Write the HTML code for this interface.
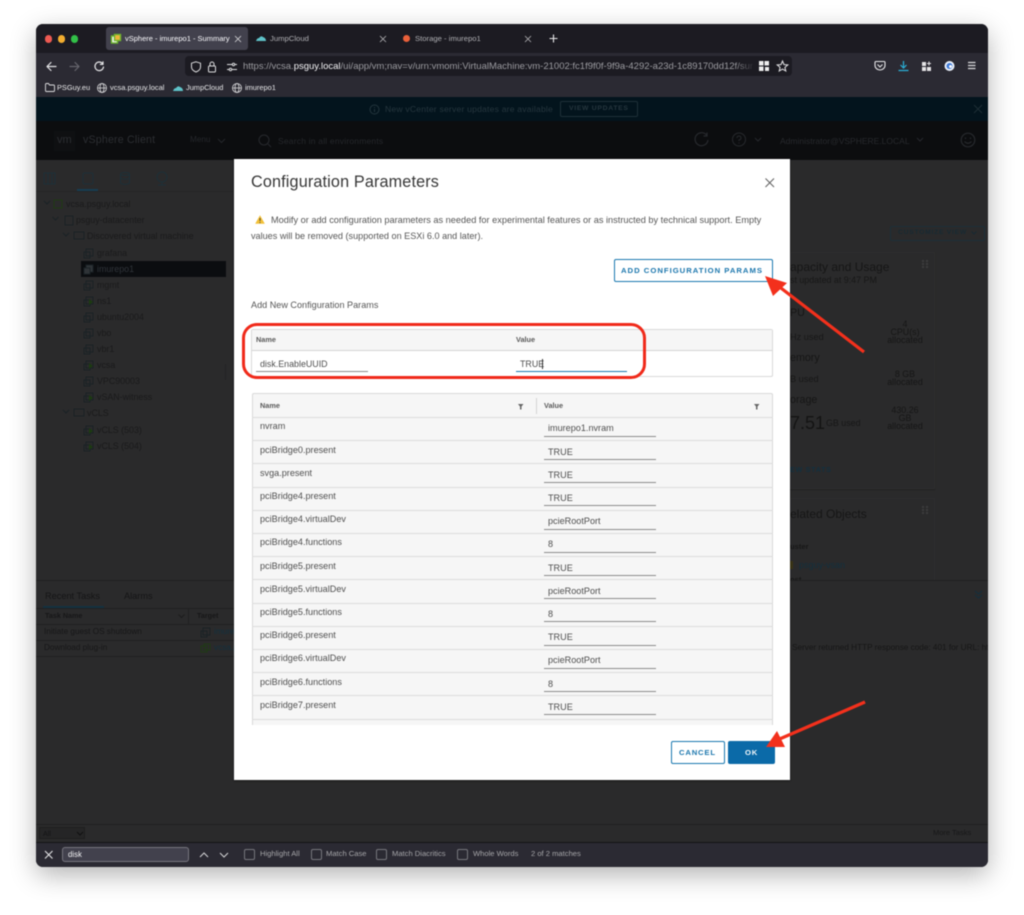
<!DOCTYPE html>
<html><head><meta charset="utf-8"><style>
html,body{margin:0;padding:0;background:#fff}
#p{position:relative;width:1024px;height:915px;overflow:hidden;background:#fff;font-family:"Liberation Sans",sans-serif;filter:blur(.4px)}
#w{position:absolute;left:36px;top:24px;width:952px;height:843px;border-radius:7px;background:#2a2a2b;box-shadow:0 8px 26px rgba(0,0,0,.3);overflow:hidden}
.a{position:absolute;white-space:nowrap;line-height:1}
.b{position:absolute}
svg{position:absolute;overflow:visible}
.d{color:#505050;font-size:9.1px}
.m{color:#565656;font-size:9.2px}
.t{font-size:8.9px;color:#1a1a1b}
.l{position:absolute;height:1px;background:#8c8c8c;left:544px;width:112px}
.r{position:absolute;left:252px;width:521px;height:1px;background:#dcdcdc}
.cb{position:absolute;width:9px;height:9px;border:1px solid #77777d;border-radius:2px;top:849px}
.ft{color:#a5a5a8;font-size:7.6px;top:850px}
.h{font-size:7.3px;font-weight:bold;color:#5a5a5a}
</style></head><body><div id="p">
<div id="w"></div>

<!-- tab bar -->
<div class="b" style="left:36px;top:24px;width:952px;height:29px;background:#1c1b22;border-radius:7px 7px 0 0"></div>
<div class="b" style="left:44.5px;top:35px;width:7.5px;height:7.5px;border-radius:50%;background:#ee5a52"></div>
<div class="b" style="left:57.5px;top:35px;width:7.5px;height:7.5px;border-radius:50%;background:#f2ad2f"></div>
<div class="b" style="left:70.5px;top:35px;width:7.5px;height:7.5px;border-radius:50%;background:#32c048"></div>
<div class="b" style="left:106px;top:27px;width:142px;height:23px;border-radius:3px;background:#42414d"></div>
<svg style="left:111px;top:34px" width="10" height="10"><rect x="0.5" y="2" width="6" height="7" fill="#f4f4f4" stroke="#6cb52d" stroke-width="1.4"/><rect x="3.5" y="0.5" width="6" height="6" fill="#f1b43a" stroke="#6cb52d" stroke-width="1.4"/></svg>
<div class="a" style="left:125px;top:35px;font-size:7.5px;color:#fbfbfe">vSphere - imurepo1 - Summary</div>
<svg style="left:235px;top:36px" width="6" height="6" stroke="#d8d8da" stroke-width=".8"><path d="M0 0L6 6M6 0L0 6"/></svg>
<svg style="left:256px;top:35px" width="10" height="7"><path d="M0 6Q1 3 3 3Q5 0 7 2Q10 3 10 6Z" fill="#5fc3c9"/></svg>
<div class="a" style="left:270px;top:35px;font-size:7.7px;color:#aeaeb2">JumpCloud</div>
<svg style="left:380px;top:36px" width="6" height="6" stroke="#b5b5b8" stroke-width=".8"><path d="M0 0L6 6M6 0L0 6"/></svg>
<div class="b" style="left:403px;top:35px;width:7px;height:7px;border-radius:50%;background:#e9603a"></div>
<div class="a" style="left:415px;top:35px;font-size:7.7px;color:#aeaeb2">Storage - imurepo1</div>
<svg style="left:525px;top:36px" width="6" height="6" stroke="#b5b5b8" stroke-width=".8"><path d="M0 0L6 6M6 0L0 6"/></svg>
<svg style="left:549px;top:34px" width="9" height="9" stroke="#e8e8ea" stroke-width="1.1"><path d="M4.500 .5V8.500M.5 4.500H8.500"/></svg>

<!-- toolbar -->
<div class="b" style="left:36px;top:53px;width:952px;height:44px;background:#2b2a33"></div>
<svg style="left:46px;top:61px" width="60" height="12" fill="none" stroke-width="1.2" stroke-linecap="round" stroke-linejoin="round"><path d="M1 5.500H10M5 1.500L1 5.500L5 9.500" stroke="#e4e4e6"/><path d="M24 5.500H33M29 1.500L33 5.500L29 9.500" stroke="#66656d"/><path d="M56.500 2.500A4.300 4.300 0 1 0 57.500 6M57 .8V3.400H54.400" stroke="#e4e4e6"/></svg>
<div class="b" style="left:185px;top:56px;width:607px;height:20px;border-radius:4px;background:#1c1b22"></div>
<svg style="left:190px;top:61px" width="50" height="12" fill="none" stroke="#dcdcde" stroke-width="1"><path d="M6 .8L10.500 2.200V6C10.500 8.500 8.500 10 6 11C3.500 10 1.500 8.500 1.500 6V2.200Z"/><rect x="18.500" y="5" width="7" height="6" rx="1"/><path d="M20 5V3A2 2 0 0 1 24 3V5"/><path d="M37 3.500H42M45 3.500H47M37 8.500H39M42 8.500H47"/><circle cx="43.500" cy="3.500" r="1.200"/><circle cx="40.500" cy="8.500" r="1.200"/></svg>
<div class="a" style="left:243px;top:62px;width:510px;overflow:hidden;font-size:9.5px;color:#9b9ba0">https://vcsa.<span style="color:#f4f4f6">psguy.local</span>/ui/app/vm;nav=v/urn:vmomi:VirtualMachine:vm-21002:fc1f9f0f-9f9a-4292-a23d-1c89170dd12f/summary</div>
<div class="b" style="left:735px;top:58px;width:20px;height:16px;background:linear-gradient(90deg,rgba(28,27,34,0),#1c1b22)"></div>
<svg style="left:759px;top:60px" width="30" height="12"><path d="M0 1H4.500V5.500H0ZM5.500 1H10V5.500H5.500ZM0 6.500H4.500V11H0ZM6 7H10V11H6Z" fill="#eee"/><path d="M23.500 1L25 4.600L28.800 4.900L25.900 7.400L26.800 11L23.500 9.100L20.200 11L21.100 7.400L18.200 4.900L22 4.600Z" fill="none" stroke="#e6e6e8"/></svg>
<svg style="left:873px;top:60px" width="105" height="13" fill="none"><path d="M3 1.500H11Q12 1.500 12 2.500V5.500C12 8 9.500 10 7 10C4.500 10 2 8 2 5.500V2.500Q2 1.500 3 1.500ZM4.500 4.500L7 7L9.500 4.500" stroke="#e8e8ea" stroke-width="1.1"/><path d="M30.500 1V7.500M27.500 5L30.500 8L33.500 5M25.500 10.500H35.500" stroke="#2ab0d8" stroke-width="1.2"/><path d="M49 2H53V6H49ZM49 7H53V11H49ZM54 7H58V11H54Z" fill="#e4e4e6"/><path d="M56 1.500V5.500M54 3.500H58" stroke="#e4e4e6"/><circle cx="76.500" cy="6" r="5" fill="#e9f0fa"/><circle cx="76.500" cy="6" r="3" fill="#3b78d8"/><circle cx="77.500" cy="6.500" r="1.500" fill="#fff"/><path d="M95 2.500H102.500M95 5.500H102.500M95 8.500H102.500" stroke="#dcdcde" stroke-width="1.2"/></svg>

<!-- bookmarks -->
<svg style="left:45px;top:83px" width="10" height="9" fill="none" stroke="#dcdcde" stroke-width=".9"><path d="M.5 1.500Q.5 .5 1.500 .5H3.500L4.500 2H8.500Q9.500 2 9.500 3V7.500Q9.500 8.500 8.500 8.500H1.500Q.5 8.500 .5 7.500Z"/></svg>
<div class="a" style="left:57px;top:84px;font-size:7.4px;color:#e8e8ea">PSGuy.eu</div>
<svg style="left:97px;top:83px" width="10" height="10" fill="none" stroke="#dcdcde" stroke-width=".8"><circle cx="5" cy="5" r="4.500"/><ellipse cx="5" cy="5" rx="2" ry="4.500"/><path d="M.5 5H9.500"/></svg>
<div class="a" style="left:110px;top:84px;font-size:7.5px;color:#e8e8ea">vcsa.psguy.local</div>
<svg style="left:173px;top:85px" width="10" height="7"><path d="M0 6Q1 3 3 3Q5 0 7 2Q10 3 10 6Z" fill="#5fc3c9"/></svg>
<div class="a" style="left:186px;top:84px;font-size:7.4px;color:#e8e8ea">JumpCloud</div>
<svg style="left:232px;top:83px" width="10" height="10" fill="none" stroke="#dcdcde" stroke-width=".8"><circle cx="5" cy="5" r="4.500"/><ellipse cx="5" cy="5" rx="2" ry="4.500"/><path d="M.5 5H9.500"/></svg>
<div class="a" style="left:245px;top:84px;font-size:7.4px;color:#e8e8ea">imurepo1</div>

<!-- vsphere banner -->
<div class="b" style="left:36px;top:97px;width:952px;height:24px;background:#03141d"></div>
<svg style="left:369px;top:104px" width="11" height="11" fill="none" stroke="#23353d"><circle cx="5.500" cy="5.500" r="4.500"/><path d="M5.500 5V8M5.500 3V4"/></svg>
<div class="a" style="left:385px;top:105px;font-size:8.6px;letter-spacing:.2px;color:#26363e">New vCenter server updates are available</div>
<div class="b" style="left:560px;top:101px;width:76px;height:14px;border:1px solid #1e3038;border-radius:2px"></div>
<div class="a" style="left:569px;top:106px;font-size:6.8px;font-weight:bold;letter-spacing:.7px;color:#26363e">VIEW UPDATES</div>
<svg style="left:974px;top:105px" width="9" height="9" stroke="#1e2e35"><path d="M0 0L8 8M8 0L0 8"/></svg>

<!-- header -->
<div class="b" style="left:36px;top:121px;width:952px;height:39px;background:#0c0d0f"></div>
<div class="b" style="left:54px;top:131px;width:21px;height:20px;background:#0f1012"></div>
<div class="a" style="left:57px;top:135px;font-size:11px;color:#2c2e32">vm</div>
<div class="a" style="left:83px;top:135px;font-size:10.6px;letter-spacing:.2px;color:#2c2e32">vSphere Client</div>
<div class="a" style="left:190px;top:136px;font-size:8.2px;color:#25272b">Menu</div>
<svg style="left:217px;top:138px" width="9" height="6" fill="none" stroke="#25272b"><path d="M1 1L4.500 4.500L8 1"/></svg>
<svg style="left:258px;top:134px" width="14" height="14" fill="none" stroke="#27292d"><circle cx="6" cy="6" r="5"/><path d="M10 10L13 13"/></svg>
<div class="a" style="left:278px;top:136.5px;font-size:8.5px;letter-spacing:.2px;color:#25272b">Search in all environments</div>
<svg style="left:694px;top:132px" width="15" height="15" fill="none" stroke="#27292d" stroke-width="1.2"><path d="M12.500 3A6.500 6.500 0 1 0 14 8M13 .5V4H9.500"/></svg>
<svg style="left:732px;top:132px" width="32" height="15" fill="none" stroke="#27292d"><circle cx="7" cy="7.500" r="6.500"/><path d="M5 6Q5 4 7 4Q9 4 9 6Q9 7.500 7 8V9M7 10.500V11.500M23 6L26 9L29 6"/></svg>
<div class="a" style="left:780px;top:137px;font-size:8.5px;color:#27292d">Administrator@VSPHERE.LOCAL</div>
<svg style="left:916px;top:137px" width="8" height="6" fill="none" stroke="#27292d"><path d="M1 1L4 4L7 1"/></svg>
<svg style="left:960px;top:132px" width="16" height="16" fill="none" stroke="#27292d" stroke-width="1.2"><circle cx="8" cy="8" r="6.800"/><path d="M4.500 9.500Q8 13 11.500 9.500"/><path d="M5.500 5.500V7M10.500 5.500V7"/></svg>

<!-- sidebar -->
<div class="b" style="left:233px;top:160px;width:1px;height:420px;background:#222223"></div>
<svg style="left:43px;top:171px" width="130" height="18" fill="none" stroke="#1d3038"><rect x="1" y="2" width="11" height="11"/><path d="M5 2V13M9 2V13"/><rect x="40" y="2" width="10" height="11" rx="1.500"/><ellipse cx="82" cy="3" rx="4.500" ry="1.500"/><path d="M77.500 3V12Q82 15 86.500 12V3M77.500 7Q82 9.500 86.500 7"/><circle cx="119" cy="6" r="5"/><path d="M119 11V14M115 14H123"/></svg>
<div class="b" style="left:77px;top:189px;width:21px;height:2px;background:#173d52"></div>
<div class="b" style="left:36px;top:191px;width:197px;height:1px;background:#252526"></div>
<div class="b" style="left:81px;top:261px;width:145px;height:16px;background:#0b0d10"></div>
<div class="a t" style="left:66px;top:199.5px">vcsa.psguy.local</div>
<div class="a t" style="left:76px;top:215.5px">psguy-datacenter</div>
<div class="a t" style="left:87px;top:231.5px">Discovered virtual machine</div>
<div class="a t" style="left:97px;top:248.5px">grafana</div>
<div class="a t" style="left:97px;top:264.5px;color:#30343a">imurepo1</div>
<div class="a t" style="left:97px;top:280.5px">mgmt</div>
<div class="a t" style="left:97px;top:296.5px">ns1</div>
<div class="a t" style="left:97px;top:312.5px">ubuntu2004</div>
<div class="a t" style="left:97px;top:328.5px">vbo</div>
<div class="a t" style="left:97px;top:344.5px">vbr1</div>
<div class="a t" style="left:97px;top:360.5px">vcsa</div>
<div class="a t" style="left:97px;top:376.5px">VPC90003</div>
<div class="a t" style="left:97px;top:392.5px">vSAN-witness</div>
<div class="a t" style="left:87px;top:408.5px">vCLS</div>
<div class="a t" style="left:97px;top:425.5px">vCLS (503)</div>
<div class="a t" style="left:97px;top:441.5px">vCLS (504)</div>
<svg style="left:41px;top:200px" width="60" height="255" fill="none" stroke="#1a2226"><path d="M3 1L6 4L9 1M11.500 17L14.500 20L17.500 17M22 33L25 36L28 33M22 210L25 213L28 210"/><rect x="13" y="0" width="8" height="8" stroke="#1f3a14"/><rect x="24" y="16" width="8" height="9"/><rect x="33" y="32" width="10" height="7"/><rect x="33" y="209" width="10" height="7"/><rect x="45" y="49" width="7" height="7"/><rect x="43" y="52" width="6" height="6"/><rect x="45" y="65" width="7" height="7" fill="#2f3337"/><rect x="43" y="68" width="6" height="6" fill="#2f3337"/><rect x="45" y="81" width="7" height="7"/><rect x="43" y="84" width="6" height="6"/><rect x="45" y="97" width="7" height="7"/><rect x="43" y="100" width="6" height="6"/><rect x="45" y="113" width="7" height="7"/><rect x="43" y="116" width="6" height="6"/><rect x="45" y="129" width="7" height="7"/><rect x="43" y="132" width="6" height="6"/><rect x="45" y="145" width="7" height="7"/><rect x="43" y="148" width="6" height="6"/><rect x="45" y="161" width="7" height="7"/><rect x="43" y="164" width="6" height="6"/><rect x="45" y="177" width="7" height="7"/><rect x="43" y="180" width="6" height="6"/><rect x="45" y="193" width="7" height="7"/><rect x="43" y="196" width="6" height="6"/><rect x="45" y="226" width="7" height="7"/><rect x="43" y="229" width="6" height="6"/><rect x="45" y="242" width="7" height="7"/><rect x="43" y="245" width="6" height="6"/><path d="M48 99V105L52 102ZM48 163V169L52 166ZM48 195V201L52 198ZM48 228V234L52 231ZM48 244V250L52 247Z" fill="#1c3b10" stroke="none"/></svg>
<div class="b" style="left:225px;top:364px;width:1px;height:16px;background:#242425"></div>

<!-- right dim panel -->
<div class="b" style="left:890px;top:226px;width:93px;height:13px;border:1px solid #1c2f38;border-radius:2px"></div>
<div class="a" style="left:898px;top:230px;font-size:6.8px;font-weight:bold;letter-spacing:.7px;color:#182a33">CUSTOMIZE VIEW</div>
<svg style="left:971px;top:231px" width="6" height="4" fill="none" stroke="#182a33"><path d="M.5 .5L3 3L5.500 .5"/></svg>
<div class="b" style="left:790px;top:252px;width:143px;height:235px;border:1px solid #2e2e2f;box-shadow:0 1px 1px #222"></div>
<div class="b" style="left:790px;top:498px;width:143px;height:91px;border:1px solid #2e2e2f"></div>
<div class="a" style="left:790px;top:261px;font-size:12px;color:#161616">apacity and Usage</div>
<div class="a" style="left:790px;top:275.5px;font-size:8.9px;color:#171717">st updated at 9:47 PM</div>
<div class="a" style="left:790px;top:308px;font-size:10.7px;color:#161616">PU</div>
<div class="a" style="left:790px;top:332.5px;font-size:9.2px;color:#171717">Hz used</div>
<div class="a" style="left:790px;top:353px;font-size:10.7px;color:#161616">emory</div>
<div class="a" style="left:790px;top:374.5px;font-size:9.2px;color:#171717">B used</div>
<div class="a" style="left:790px;top:395px;font-size:10.7px;color:#161616">orage</div>
<div class="a" style="left:790px;top:414px;font-size:18px;color:#141414">7.51</div>
<div class="a" style="left:826px;top:419px;font-size:8.9px;color:#171717">GB used</div>
<div class="a" style="left:885px;top:320px;width:40px;text-align:center;font-size:8.9px;line-height:8px;color:#161616;white-space:normal">4<br>CPU(s)<br>allocated</div>
<div class="a" style="left:885px;top:370px;width:40px;text-align:center;font-size:8.9px;line-height:8px;color:#161616;white-space:normal">8 GB<br>allocated</div>
<div class="a" style="left:885px;top:406px;width:40px;text-align:center;font-size:8.9px;line-height:8px;color:#161616;white-space:normal">430.26<br>GB<br>allocated</div>
<div class="a" style="left:790px;top:466px;font-size:7.2px;font-weight:bold;letter-spacing:.7px;color:#13303f">EW STATS</div>
<div class="a" style="left:790px;top:508px;font-size:12px;color:#161616">elated Objects</div>
<div class="a" style="left:790px;top:543px;font-size:7.6px;font-weight:bold;color:#171717">uster</div>
<div class="b" style="left:790px;top:561px;width:3px;height:8px;background:#3a3416"></div>
<div class="a" style="left:799px;top:561px;font-size:9px;color:#12303f">psguy-vsan</div>
<div class="a" style="left:790px;top:576px;font-size:7.6px;font-weight:bold;color:#171717">ost</div>
<svg style="left:922px;top:260px" width="6" height="8" fill="#3b3b3c"><path d="M0 0h2v2H0zM4 0h2v2H4zM0 3h2v2H0zM4 3h2v2H4zM0 6h2v2H0zM4 6h2v2H4z"/></svg>
<svg style="left:922px;top:506px" width="6" height="8" fill="#3b3b3c"><path d="M0 0h2v2H0zM4 0h2v2H4zM0 3h2v2H0zM4 3h2v2H4zM0 6h2v2H0zM4 6h2v2H4z"/></svg>

<!-- bottom panel -->
<div class="b" style="left:790px;top:581px;width:198px;height:243px;background:#2a2a2b"></div>
<div class="b" style="left:36px;top:580px;width:952px;height:1px;background:#202021"></div>
<div class="b" style="left:36px;top:581px;width:198px;height:243px;background:#2a2a2b"></div>
<div class="a" style="left:45px;top:592px;font-size:9.2px;color:#151516">Recent Tasks</div>
<div class="a" style="left:124px;top:592px;font-size:9.2px;color:#151516">Alarms</div>
<div class="b" style="left:43px;top:606px;width:61px;height:2px;background:#143140"></div>
<div class="b" style="left:36px;top:608px;width:198px;height:1px;background:#202021"></div>
<div class="a" style="left:45px;top:612px;font-size:7.2px;font-weight:bold;color:#171718">Task Name</div>
<svg style="left:178px;top:614px" width="7" height="5" fill="none" stroke="#1c1c1d"><path d="M.5 .5L3.500 3.500L6.500 .5"/></svg>
<div class="a" style="left:197px;top:612px;font-size:7.2px;font-weight:bold;color:#171718">Target</div>
<div class="b" style="left:188px;top:609px;width:1px;height:15px;background:#202021"></div>
<div class="b" style="left:36px;top:624px;width:198px;height:1px;background:#202021"></div>
<div class="b" style="left:36px;top:640px;width:198px;height:1px;background:#202021"></div>
<div class="b" style="left:36px;top:656px;width:198px;height:1px;background:#202021"></div>
<div class="a" style="left:44px;top:628px;font-size:8.2px;color:#171718">Initiate guest OS shutdown</div>
<div class="a" style="left:44px;top:644px;font-size:8.2px;color:#171718">Download plug-in</div>
<svg style="left:200px;top:627px" width="11" height="28" fill="none" stroke="#1a2226"><rect x="3" y="1" width="7" height="7"/><rect x="1" y="4" width="6" height="6"/><rect x="1" y="19" width="6" height="6" stroke="#1f3a14"/><rect x="4" y="17" width="6" height="6" stroke="#1f3a14"/></svg>
<div class="a" style="left:214px;top:628px;font-size:8.2px;color:#12303f">imure</div>
<div class="a" style="left:214px;top:644px;font-size:8.2px;color:#12303f">vcsa.p</div>
<div class="a" style="left:792px;top:644px;width:196px;overflow:hidden;font-size:8.2px;color:#161616">Server returned HTTP response code: 401 for URL: ht</div>
<svg style="left:974px;top:590px" width="9" height="10" fill="none" stroke="#12303f"><path d="M1 1L4.500 4L8 1M1 5L4.500 8L8 5"/></svg>

<!-- bottom strip + find -->
<div class="b" style="left:36px;top:824px;width:952px;height:1px;background:#202021"></div>
<div class="b" style="left:39px;top:827px;width:46px;height:12px;background:#252526;border:1px solid #1e1e1f;box-sizing:border-box"></div>
<div class="a" style="left:43px;top:830px;font-size:7.2px;color:#141415">All</div>
<svg style="left:76px;top:831px" width="8" height="6" fill="none" stroke="#111"><path d="M1 1L4 4L7 1"/></svg>
<div class="a" style="left:933px;top:829px;font-size:7.5px;color:#171718">More Tasks</div>
<div class="b" style="left:36px;top:842px;width:952px;height:1px;background:#131316"></div>
<div class="b" style="left:36px;top:843px;width:952px;height:24px;background:#2b2a33;border-radius:0 0 7px 7px"></div>
<svg style="left:44px;top:850px" width="10" height="10" stroke="#e2e2e4" stroke-width="1.1"><path d="M1 1L8.500 8.500M8.500 1L1 8.500"/></svg>
<div class="b" style="left:62px;top:847px;width:127px;height:15px;box-sizing:border-box;background:#42414d;border:1px solid #77767f;border-radius:3px"></div>
<div class="a" style="left:68px;top:850.5px;font-size:7.8px;color:#f0f0f2">disk</div>
<svg style="left:199px;top:851px" width="32" height="8" fill="none" stroke="#d4d4d6" stroke-width="1"><path d="M1 6L5 2L9 6M21 2L25 6L29 2"/></svg>
<div class="cb" style="left:244px"></div><div class="a ft" style="left:260px">Highlight All</div>
<div class="cb" style="left:311px"></div><div class="a ft" style="left:326px">Match Case</div>
<div class="cb" style="left:376px"></div><div class="a ft" style="left:392px">Match Diacritics</div>
<div class="cb" style="left:457px"></div><div class="a ft" style="left:473px">Whole Words</div>
<div class="a ft" style="left:531px">2 of 2 matches</div>

<!-- modal -->
<div class="b" style="left:234px;top:158.5px;width:555.5px;height:621.5px;background:#fff;box-shadow:0 1px 2px rgba(0,0,0,.4)"></div>
<div class="a" style="left:251px;top:174px;font-size:16.2px;color:#373737;letter-spacing:.15px">Configuration Parameters</div>
<svg style="left:765px;top:178px" width="10" height="10" stroke="#666" stroke-width="1.1"><path d="M.5 .5L9 9M9 .5L.5 9"/></svg>
<svg style="left:254.5px;top:215px" width="10" height="9"><path d="M5 .3L9.800 8.700H.2Z" fill="#f2c037"/><path d="M5 3V6M5 7V8" stroke="#3a3a3a" stroke-width=".9"/></svg>
<div class="a m" style="left:271px;top:216px">Modify or add configuration parameters as needed for experimental features or as instructed by technical support. Empty</div>
<div class="a m" style="left:251px;top:231.5px;font-size:9.1px">values will be removed (supported on ESXi 6.0 and later).</div>
<div class="b" style="left:613.5px;top:259px;width:159px;height:23px;box-sizing:border-box;border:1px solid #1a78b0;border-radius:2px;background:#fff"></div>
<div class="a" style="left:621px;top:267px;font-size:7.7px;font-weight:bold;letter-spacing:1px;color:#1b76ad">ADD CONFIGURATION PARAMS</div>
<div class="a m" style="left:251px;top:300.5px;font-size:9.1px">Add New Configuration Params</div>

<!-- add table -->
<div class="b" style="left:251px;top:329px;width:522px;height:48px;box-sizing:border-box;border:1px solid #d9d9d9;border-radius:2px;background:#fff"></div>
<div class="b" style="left:252px;top:330px;width:520px;height:20px;background:#f6f6f6;border-bottom:1px solid #d4d4d4"></div>
<div class="a h" style="left:256px;top:335.5px">Name</div>
<div class="a h" style="left:516px;top:335.5px">Value</div>
<div class="a d" style="left:260px;top:360px;font-size:8.9px">disk.EnableUUID</div>
<div class="b" style="left:256px;top:371px;width:112px;height:1px;background:#8c8c8c"></div>
<div class="a d" style="left:520px;top:360px;font-size:8.9px">TRUE</div>
<div class="b" style="left:542px;top:359px;width:1px;height:10px;background:#333"></div>
<div class="b" style="left:516px;top:371px;width:111px;height:1px;background:#1a78b0"></div>

<!-- params table -->
<div class="b" style="left:252px;top:393px;width:521px;height:335px;box-sizing:border-box;border:1px solid #d9d9d9;border-bottom:none;border-radius:2px 2px 0 0;background:#f6f6f6"></div>
<div class="b" style="left:536px;top:398px;width:1px;height:16px;background:#d4d4d4"></div>
<div class="a h" style="left:260px;top:401.5px">Name</div>
<div class="a h" style="left:544px;top:401.5px">Value</div>
<svg style="left:518px;top:404px" width="6" height="6" fill="#666"><path d="M0 0H5.500L3.500 2.500V5.500H2V2.500Z"/></svg>
<svg style="left:754px;top:404px" width="6" height="6" fill="#666"><path d="M0 0H5.500L3.500 2.500V5.500H2V2.500Z"/></svg>

<div class="r" style="top:417px"></div><div class="r" style="top:440px"></div><div class="r" style="top:463px"></div><div class="r" style="top:487px"></div><div class="r" style="top:510px"></div><div class="r" style="top:533px"></div><div class="r" style="top:556px"></div><div class="r" style="top:579px"></div><div class="r" style="top:603px"></div><div class="r" style="top:626px"></div><div class="r" style="top:649px"></div><div class="r" style="top:672px"></div><div class="r" style="top:695px"></div><div class="r" style="top:719px"></div>

<div class="a d" style="left:260px;top:422px">nvram</div><div class="a d" style="left:548px;top:424px">imurepo1.nvram</div><div class="l" style="top:436px"></div>
<div class="a d" style="left:260px;top:446px">pciBridge0.present</div><div class="a d" style="left:548px;top:448px">TRUE</div><div class="l" style="top:459px"></div>
<div class="a d" style="left:260px;top:469px">svga.present</div><div class="a d" style="left:548px;top:471px">TRUE</div><div class="l" style="top:482px"></div>
<div class="a d" style="left:260px;top:492px">pciBridge4.present</div><div class="a d" style="left:548px;top:494px">TRUE</div><div class="l" style="top:505px"></div>
<div class="a d" style="left:260px;top:515px">pciBridge4.virtualDev</div><div class="a d" style="left:548px;top:517px">pcieRootPort</div><div class="l" style="top:529px"></div>
<div class="a d" style="left:260px;top:538px">pciBridge4.functions</div><div class="a d" style="left:548px;top:540px">8</div><div class="l" style="top:552px"></div>
<div class="a d" style="left:260px;top:562px">pciBridge5.present</div><div class="a d" style="left:548px;top:564px">TRUE</div><div class="l" style="top:575px"></div>
<div class="a d" style="left:260px;top:585px">pciBridge5.virtualDev</div><div class="a d" style="left:548px;top:587px">pcieRootPort</div><div class="l" style="top:598px"></div>
<div class="a d" style="left:260px;top:608px">pciBridge5.functions</div><div class="a d" style="left:548px;top:610px">8</div><div class="l" style="top:621px"></div>
<div class="a d" style="left:260px;top:631px">pciBridge6.present</div><div class="a d" style="left:548px;top:633px">TRUE</div><div class="l" style="top:645px"></div>
<div class="a d" style="left:260px;top:654px">pciBridge6.virtualDev</div><div class="a d" style="left:548px;top:656px">pcieRootPort</div><div class="l" style="top:668px"></div>
<div class="a d" style="left:260px;top:678px">pciBridge6.functions</div><div class="a d" style="left:548px;top:680px">8</div><div class="l" style="top:691px"></div>
<div class="a d" style="left:260px;top:701px">pciBridge7.present</div><div class="a d" style="left:548px;top:703px">TRUE</div><div class="l" style="top:714px"></div>
<div class="b" style="left:234px;top:725px;width:555.5px;height:14px;background:#fff"></div>

<!-- footer buttons -->
<div class="b" style="left:671px;top:741px;width:54px;height:23px;box-sizing:border-box;border:1px solid #1a78b0;border-radius:2px;background:#fff"></div>
<div class="a" style="left:679px;top:749px;font-size:7.7px;font-weight:bold;letter-spacing:.8px;color:#1b76ad">CANCEL</div>
<div class="b" style="left:728px;top:741px;width:47px;height:23px;border-radius:2px;background:#0b6aa8"></div>
<div class="a" style="left:745px;top:749px;font-size:7.7px;font-weight:bold;letter-spacing:.8px;color:#f4f8fb">OK</div>

<!-- annotations -->
<div class="b" style="left:242px;top:322.5px;width:403.5px;height:56px;box-sizing:border-box;border:3.4px solid #f02a1a;border-radius:15px"></div>
<svg style="left:0;top:0" width="1024" height="915" fill="none"><path d="M864 352L777 285" stroke="#f3301c" stroke-width="3.2"/><path d="M765 276L787 283L773 296Z" fill="#f3301c"/><path d="M865 702L775 741" stroke="#f3301c" stroke-width="3.2"/><path d="M766 747L777 731L785 747Z" fill="#f3301c"/></svg>
</div></body></html>
